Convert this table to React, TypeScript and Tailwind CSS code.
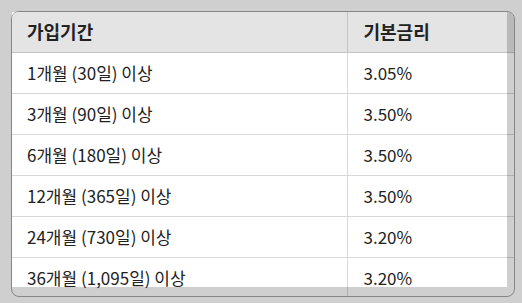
const rows = [
  ["1개월 (30일) 이상", "3.05%"],
  ["3개월 (90일) 이상", "3.50%"],
  ["6개월 (180일) 이상", "3.50%"],
  ["12개월 (365일) 이상", "3.50%"],
  ["24개월 (730일) 이상", "3.20%"],
  ["36개월 (1,095일) 이상", "3.20%"],
];

export default function App() {
  return (
    <div
      className="relative h-[303px] w-[522px] overflow-hidden bg-white p-[11px] text-[#222]"
      style={{fontFamily: '"Noto Sans CJK KR", "Noto Sans", sans-serif'}}
    >
      <div className="h-[286px] w-[504px] overflow-hidden rounded-lg border border-[#a6a6a6]">
        <table className="w-full border-collapse text-left">
          <thead>
            <tr className="h-[40px] border-b border-[#c4c4c4] bg-[#e4e4e4]">
              <th className="w-[335px] border-r border-[#c4c4c4] pl-[15px] text-[18px] font-bold">가입기간</th>
              <th className="pl-[16px] text-[18px] font-bold">기본금리</th>
            </tr>
          </thead>
          <tbody>
            {rows.map(([term, rate]) => (
              <tr key={term} className="h-[41px] border-b border-[#d8d8d8]">
                <td className="border-r border-[#d8d8d8] pl-[15px] text-[17px]">{term}</td>
                <td className="pl-[16px] text-[17px]">{rate}</td>
              </tr>
            ))}
          </tbody>
        </table>
      </div>
      {/* spotlight mask */}
      <div className="pointer-events-none absolute left-[12px] top-[12px] h-[275px] w-[495px] shadow-[0_0_0_9999px_rgba(0,0,0,0.19)]" />
    </div>
  );
}
